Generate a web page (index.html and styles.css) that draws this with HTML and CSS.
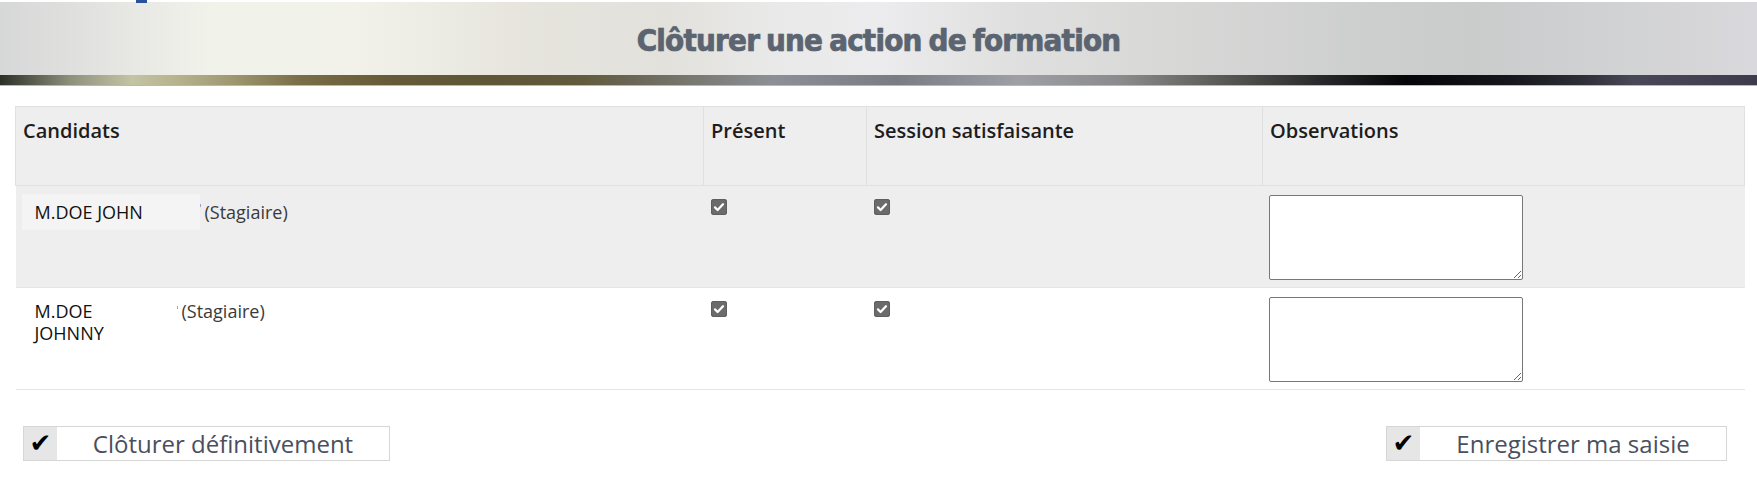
FILE: index.html
```html
<!DOCTYPE html>
<html lang="fr">
<head>
<meta charset="utf-8">
<title>Clôturer une action de formation</title>
<link rel="stylesheet" href="styles.css">
</head>
<body>
<div class="topline"><span class="topmark"></span></div>
<header class="banner">
  <h1 class="title">Clôturer une action de formation</h1>
</header>
<div class="band"></div>

<main class="content">
  <table class="grid">
    <colgroup>
      <col class="c1"><col class="c2"><col class="c3"><col class="c4">
    </colgroup>
    <thead>
      <tr>
        <th>Candidats</th>
        <th>Présent</th>
        <th>Session satisfaisante</th>
        <th>Observations</th>
      </tr>
    </thead>
    <tbody>
      <tr class="odd">
        <td><span class="name name-wide">M.DOE JOHN</span><span class="tick"></span><span class="role">(Stagiaire)</span></td>
        <td><span class="cb"><svg viewBox="0 0 16 16" width="16" height="16"><path d="M4 8.4l2.6 2.6L12 5.2" fill="none" stroke="#fff" stroke-width="2.2" stroke-linecap="round" stroke-linejoin="round"/></svg></span></td>
        <td><span class="cb"><svg viewBox="0 0 16 16" width="16" height="16"><path d="M4 8.4l2.6 2.6L12 5.2" fill="none" stroke="#fff" stroke-width="2.2" stroke-linecap="round" stroke-linejoin="round"/></svg></span></td>
        <td><textarea class="obs"></textarea></td>
      </tr>
      <tr class="even">
        <td><span class="name name-narrow">M.DOE JOHNNY</span><span class="tick"></span><span class="role">(Stagiaire)</span></td>
        <td><span class="cb"><svg viewBox="0 0 16 16" width="16" height="16"><path d="M4 8.4l2.6 2.6L12 5.2" fill="none" stroke="#fff" stroke-width="2.2" stroke-linecap="round" stroke-linejoin="round"/></svg></span></td>
        <td><span class="cb"><svg viewBox="0 0 16 16" width="16" height="16"><path d="M4 8.4l2.6 2.6L12 5.2" fill="none" stroke="#fff" stroke-width="2.2" stroke-linecap="round" stroke-linejoin="round"/></svg></span></td>
        <td><textarea class="obs"></textarea></td>
      </tr>
    </tbody>
  </table>

  <div class="actions">
    <button class="btn btn-close" type="button"><span class="btn-ico">✔</span><span class="btn-label">Clôturer définitivement</span></button>
    <button class="btn btn-save" type="button"><span class="btn-ico">✔</span><span class="btn-label">Enregistrer ma saisie</span></button>
  </div>
</main>
</body>
</html>
```
FILE: styles.css
```css
html, body {
  margin: 0;
  padding: 0;
  background: #ffffff;
  font-family: "Open Sans", "Liberation Sans", sans-serif;
  color: #222;
}

.topline {
  height: 2px;
  position: relative;
}
.topmark {
  position: absolute;
  left: 136px;
  top: 0;
  width: 11px;
  height: 3px;
  background: #2c4f9a;
}

.banner {
  height: 73px;
  display: flex;
  align-items: center;
  justify-content: center;
  background: linear-gradient(90deg,
    #d6d7d7 0%, #e6e7e3 7%, #f1f2ea 12%, #f2f2ea 20%, #e6e4dd 30%,
    #e2e1dc 38%, #e9e9e9 44%, #ececee 50%, #dfdfdf 58%, #d8d9d7 66%,
    #cdcece 78%, #cacbcb 84%, #d1d2d4 92%, #d9d8dc 100%);
}

.title {
  margin: 0;
  padding-top: 3px;
  font-family: "DejaVu Sans Condensed", "DejaVu Sans", sans-serif;
  font-weight: bold;
  font-size: 31px;
  letter-spacing: -0.8px;
  word-spacing: -2px;
  color: #5b6470;
  -webkit-text-stroke: 0.6px #5b6470;
  text-shadow: 0 0 1px rgba(90, 100, 112, 0.5);
}

.band {
  height: 10px;
  border-bottom: 1px solid #b9b9b0;
  background: linear-gradient(90deg,
    #2c2f27 0%, #5c6050 2%, #8e907c 4%, #c3c4a4 7.5%, #b6b38e 10%,
    #a09a72 13%, #7a6e48 17%, #665a38 22%, #5e5636 28%, #625a3c 33%,
    #6a6656 36%, #8c9096 44%, #7a7c84 51%, #9ea0a6 58%, #8a8a8c 64%,
    #555650 70%, #2a2a2c 75%, #050508 80%, #16161c 86%, #2e2e36 90%,
    #4a4858 93%, #3e3c4c 100%);
}

.content {
  padding: 20px 12px 0 15px;
}

.grid {
  width: 100%;
  border-collapse: collapse;
  table-layout: fixed;
  font-size: 18px;
}
.c1 { width: 688px; }
.c2 { width: 163px; }
.c3 { width: 396px; }

.grid th {
  height: 79px;
  box-sizing: border-box;
  background: #eeeeee;
  border: 1px solid #e0e0e0;
  text-align: left;
  vertical-align: top;
  padding: 10px 7px 8px 7px;
  font-size: 20px;
  font-weight: 600;
  line-height: 28px;
  color: #1d1d1d;
}

.grid td {
  vertical-align: top;
  padding: 8px 6px 7px 6px;
  border-bottom: 1px solid #e4e4e4;
}
.grid tr.odd td { background: #eeeeee; }
.grid tr.even td { background: #ffffff; }

.name {
  display: inline-block;
  vertical-align: top;
  box-sizing: border-box;
  padding: 7px 13px;
  line-height: 22px;
  color: #111;
}
.name-wide {
  width: 178px;
  background: #f4f4f4;
}
.name-narrow {
  width: 155px;
  padding-top: 4px;
  line-height: 22px;
}
.tick {
  display: inline-block;
  vertical-align: top;
  width: 1px;
  height: 3px;
  margin-top: 10px;
  background: #9aa4c0;
}
.role {
  display: inline-block;
  vertical-align: top;
  margin-left: 4px;
  padding-top: 7px;
  line-height: 22px;
  color: #3a3a3a;
}
.even .role { padding-top: 4px; }

.cb {
  display: inline-block;
  width: 16px;
  height: 16px;
  margin-top: 5px;
  margin-left: 1px;
  border-radius: 3px;
  background: #6b6b6b;
  box-shadow: 0 0 0 1px #5e5e5e inset;
}
.cb svg { display: block; }

.obs {
  display: block;
  box-sizing: border-box;
  width: 254px;
  height: 85px;
  margin: 1px 0 0 0;
  border: 1px solid #777;
  border-radius: 2px;
  background: #fff;
  resize: both;
}

.actions {
  display: flex;
  justify-content: space-between;
  padding: 36px 18px 0 8px;
}

.btn {
  display: flex;
  align-items: stretch;
  height: 35px;
  padding: 0;
  box-sizing: border-box;
  border: 1px solid #d6d6d6;
  background: #ffffff;
  cursor: pointer;
  font-family: "Open Sans", "Liberation Sans", sans-serif;
}
.btn-close { width: 367px; }
.btn-save { width: 341px; }

.btn-ico {
  width: 33px;
  flex: none;
  background: #e6e6e6;
  color: #000;
  font-family: "DejaVu Sans", sans-serif;
  font-size: 26px;
  line-height: 33px;
  text-align: center;
}
.btn-label {
  flex: 1;
  font-size: 24px;
  line-height: 33px;
  text-align: center;
  color: #4a4f60;
}
```
